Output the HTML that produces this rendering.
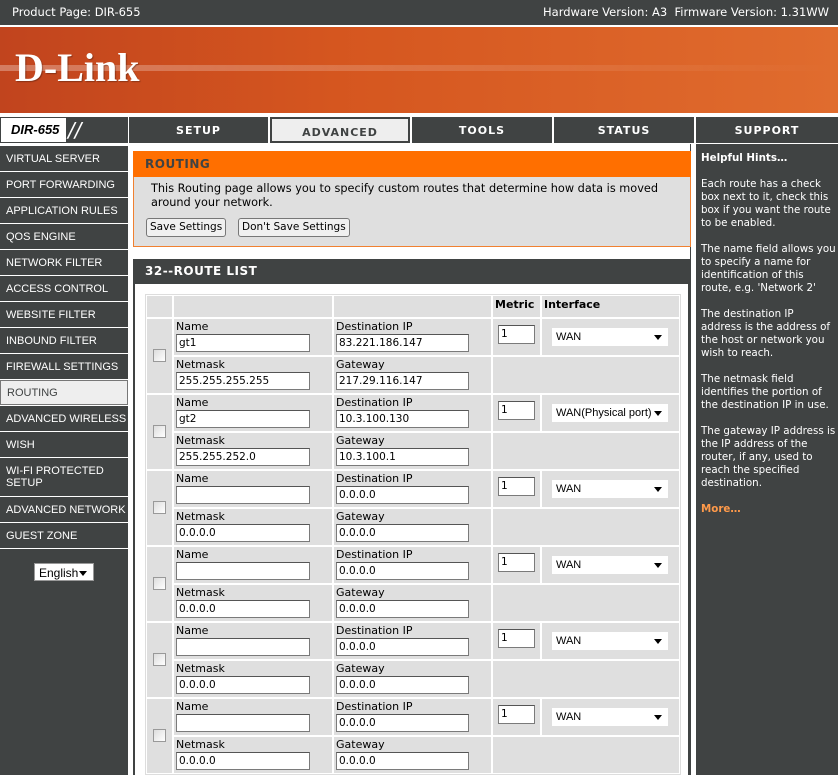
<!DOCTYPE html>
<html><head><meta charset="utf-8"><style>
*{margin:0;padding:0;box-sizing:border-box}
body{width:838px;height:775px;overflow:hidden;background:#fff;font-family:"DejaVu Sans","Liberation Sans",sans-serif;font-size:11px;color:#000;position:relative}
.a{position:absolute}
.dk{background:#404343}
.top{left:0;top:0;width:838px;height:25px;color:#fff;font-size:11.5px;line-height:25px}
.banner{left:0;top:27px;width:838px;height:86px;background:linear-gradient(90deg,#c1441e 0%,#d5561f 40%,#e06c2e 100%)}
.logo{left:15px;top:44px;color:#fff;font-family:"Liberation Serif",serif;font-weight:bold;font-size:40px;letter-spacing:0px;text-shadow:1px 1px 1px rgba(0,0,0,.3)}
.nav{top:117px;height:26px;color:#fff;font-weight:bold;font-size:11px;letter-spacing:1px;text-align:center;line-height:27px}
.side{left:0;width:128px;color:#fff;font-family:"Liberation Sans",sans-serif;font-size:11px;padding-left:6px;display:flex;align-items:center;line-height:12px}
.inp{background:#fff;border:1px solid #7a7a7a;border-top-color:#555;height:18px;font-size:10.5px;line-height:16px;padding-left:2px}
.cell{background:#dfdfdf}
.lbl{font-size:11px}
.btn{background:#f0f0f0;border:1px solid #777;border-radius:3px;font-size:10.5px;height:19px;line-height:17px;padding:0 3px}
.sel{background:#fff;height:18px;font-size:10px;line-height:18px;padding-left:4px;font-family:"Liberation Sans",sans-serif;font-size:11px}
.arr{position:absolute;right:6px;top:7px;border-left:4px solid transparent;border-right:4px solid transparent;border-top:5px solid #000}
.hint{color:#fff;font-size:10.3px;line-height:13px}
</style></head><body>
<div class="a dk top" style="padding-left:12px">Product Page: DIR-655</div>
<div class="a top" style="color:#fff;left:543px;width:300px">Hardware Version: A3 &nbsp;Firmware Version: 1.31WW</div>
<div class="a banner"></div>
<div class="a" style="left:0;top:65px;width:838px;height:6px;background:linear-gradient(90deg,rgba(255,255,255,.3),rgba(255,255,255,.12) 60%,rgba(255,255,255,0))"></div>
<div class="a logo">D-Link</div>
<div class="a" style="left:0;top:117px;width:128px;height:26px;background:#404343"></div>
<div class="a" style="left:1px;top:118px;width:65px;height:24px;background:#fff;font-family:'Liberation Sans',sans-serif;font-style:italic;font-weight:bold;font-size:13px;line-height:24px;padding-left:10px">DIR-655</div>
<div class="a" style="left:68px;top:117px;color:#fff;font-size:20px;font-style:italic;line-height:26px">//</div>
<div class="a dk nav" style="left:129px;width:139px">SETUP</div>
<div class="a nav" style="left:270px;width:140px;background:#eee;border:2px solid #404343;color:#404343;outline:1px solid #fff">ADVANCED</div>
<div class="a dk nav" style="left:412px;width:140px">TOOLS</div>
<div class="a dk nav" style="left:554px;width:140px">STATUS</div>
<div class="a dk nav" style="left:696px;width:142px">SUPPORT</div>
<div class="a" style="left:0;top:144px;width:128px;height:631px;background:#fff"></div>
<div class="a side dk" style="top:146px;height:25px">VIRTUAL SERVER</div>
<div class="a side dk" style="top:172px;height:25px">PORT FORWARDING</div>
<div class="a side dk" style="top:198px;height:25px">APPLICATION RULES</div>
<div class="a side dk" style="top:224px;height:25px">QOS ENGINE</div>
<div class="a side dk" style="top:250px;height:25px">NETWORK FILTER</div>
<div class="a side dk" style="top:276px;height:25px">ACCESS CONTROL</div>
<div class="a side dk" style="top:302px;height:25px">WEBSITE FILTER</div>
<div class="a side dk" style="top:328px;height:25px">INBOUND FILTER</div>
<div class="a side dk" style="top:354px;height:25px">FIREWALL SETTINGS</div>
<div class="a side" style="top:380px;height:25px;background:#eee;color:#404343;border:1px solid #777">ROUTING</div>
<div class="a side dk" style="top:406px;height:25px">ADVANCED WIRELESS</div>
<div class="a side dk" style="top:432px;height:25px">WISH</div>
<div class="a side dk" style="top:458px;height:38px">WI-FI PROTECTED<br>SETUP</div>
<div class="a side dk" style="top:497px;height:25px">ADVANCED NETWORK</div>
<div class="a side dk" style="top:523px;height:25px">GUEST ZONE</div>
<div class="a dk" style="left:0;top:549px;width:128px;height:226px"></div>
<div class="a sel" style="left:34px;top:563px;width:60px;font-size:12px;border:1px solid #999"><span>English</span><span class="arr"></span></div>
<div class="a" style="left:690px;top:144px;width:1px;height:631px;background:#404343"></div>
<div class="a" style="left:133px;top:151px;width:558px;height:96px;background:#dfdfdf;border:1px solid #f08030"></div>
<div class="a" style="left:133px;top:151px;width:558px;height:26px;background:#ff6f00;color:#404343;font-weight:bold;font-size:12px;line-height:26px;padding-left:12px;letter-spacing:.5px">ROUTING</div>
<div class="a" style="left:151px;top:182px;width:530px;font-size:11.3px;line-height:14px">This Routing page allows you to specify custom routes that determine how data is moved around your network.</div>
<div class="a btn" style="left:146px;top:218px">Save Settings</div>
<div class="a btn" style="left:238px;top:218px">Don't Save Settings</div>
<div class="a dk" style="left:133px;top:259px;width:558px;height:516px"></div>
<div class="a" style="left:133px;top:259px;width:557px;height:25px;color:#fff;font-weight:bold;font-size:12px;line-height:25px;padding-left:12px;letter-spacing:.5px">32--ROUTE LIST</div>
<div class="a" style="left:135px;top:284px;width:553px;height:491px;background:#fff"></div>
<div class="a" style="left:145px;top:294px;width:536px;height:481px;background:#fff;border:1px solid #ddd"></div>
<div class="a cell" style="left:147px;top:296px;width:25px;height:21px"></div>
<div class="a cell" style="left:174px;top:296px;width:158px;height:21px"></div>
<div class="a cell" style="left:334px;top:296px;width:157px;height:21px"></div>
<div class="a cell lbl" style="left:493px;top:296px;width:47px;height:21px;font-weight:bold;padding:2px 0 0 2px">Metric</div>
<div class="a cell lbl" style="left:542px;top:296px;width:137px;height:21px;font-weight:bold;padding:2px 0 0 2px">Interface</div>
<div id="rows"></div>
<div class="a" style="left:696px;top:144px;width:142px;height:631px;background:#404343"></div>
<div class="a hint" style="left:701px;top:152px;width:136px">
<b>Helpful Hints…</b><br><br>
Each route has a check box next to it, check this box if you want the route to be enabled.<br><br>
The name field allows you to specify a name for identification of this route, e.g. 'Network 2'<br><br>
The destination IP address is the address of the host or network you wish to reach.<br><br>
The netmask field identifies the portion of the destination IP in use.<br><br>
The gateway IP address is the IP address of the router, if any, used to reach the specified destination.<br><br>
<b style="color:#ff9a4a">More…</b></div>
<script>
var d=[["gt1","83.221.186.147","255.255.255.255","217.29.116.147","WAN"],["gt2","10.3.100.130","255.255.252.0","10.3.100.1","WAN(Physical port)"],["","0.0.0.0","0.0.0.0","0.0.0.0","WAN"],["","0.0.0.0","0.0.0.0","0.0.0.0","WAN"],["","0.0.0.0","0.0.0.0","0.0.0.0","WAN"],["","0.0.0.0","0.0.0.0","0.0.0.0","WAN"]];
var h="";
d.forEach(function(r,i){var y=319+i*76;
h+='<div class="a cell" style="left:147px;top:'+y+'px;width:25px;height:74px"></div>';
h+='<div class="a" style="left:153px;top:'+(y+30)+'px;width:13px;height:13px;border:1px solid #999;background:linear-gradient(135deg,#ddd,#fff)"></div>';
h+='<div class="a cell" style="left:174px;top:'+y+'px;width:158px;height:36px"><div class="lbl" style="padding:1px 0 0 2px;line-height:14px">Name</div><div class="inp" style="margin-left:2px;width:134px">'+r[0]+'</div></div>';
h+='<div class="a cell" style="left:334px;top:'+y+'px;width:157px;height:36px"><div class="lbl" style="padding:1px 0 0 2px;line-height:14px">Destination IP</div><div class="inp" style="margin-left:2px;width:133px">'+r[1]+'</div></div>';
h+='<div class="a cell" style="left:493px;top:'+y+'px;width:47px;height:36px"><div class="inp" style="margin:6px 0 0 5px;width:37px;height:19px;line-height:17px">1</div></div>';
h+='<div class="a cell" style="left:542px;top:'+y+'px;width:137px;height:36px"><div class="sel" style="position:relative;margin:9px 0 0 10px;width:116px">'+r[4]+'<span class="arr"></span></div></div>';
h+='<div class="a cell" style="left:174px;top:'+(y+38)+'px;width:158px;height:36px"><div class="lbl" style="padding:1px 0 0 2px;line-height:14px">Netmask</div><div class="inp" style="margin-left:2px;width:134px">'+r[2]+'</div></div>';
h+='<div class="a cell" style="left:334px;top:'+(y+38)+'px;width:157px;height:36px"><div class="lbl" style="padding:1px 0 0 2px;line-height:14px">Gateway</div><div class="inp" style="margin-left:2px;width:133px">'+r[3]+'</div></div>';
h+='<div class="a cell" style="left:493px;top:'+(y+38)+'px;width:186px;height:36px"></div>';
});
document.getElementById("rows").outerHTML=h;
</script>
</body></html>
